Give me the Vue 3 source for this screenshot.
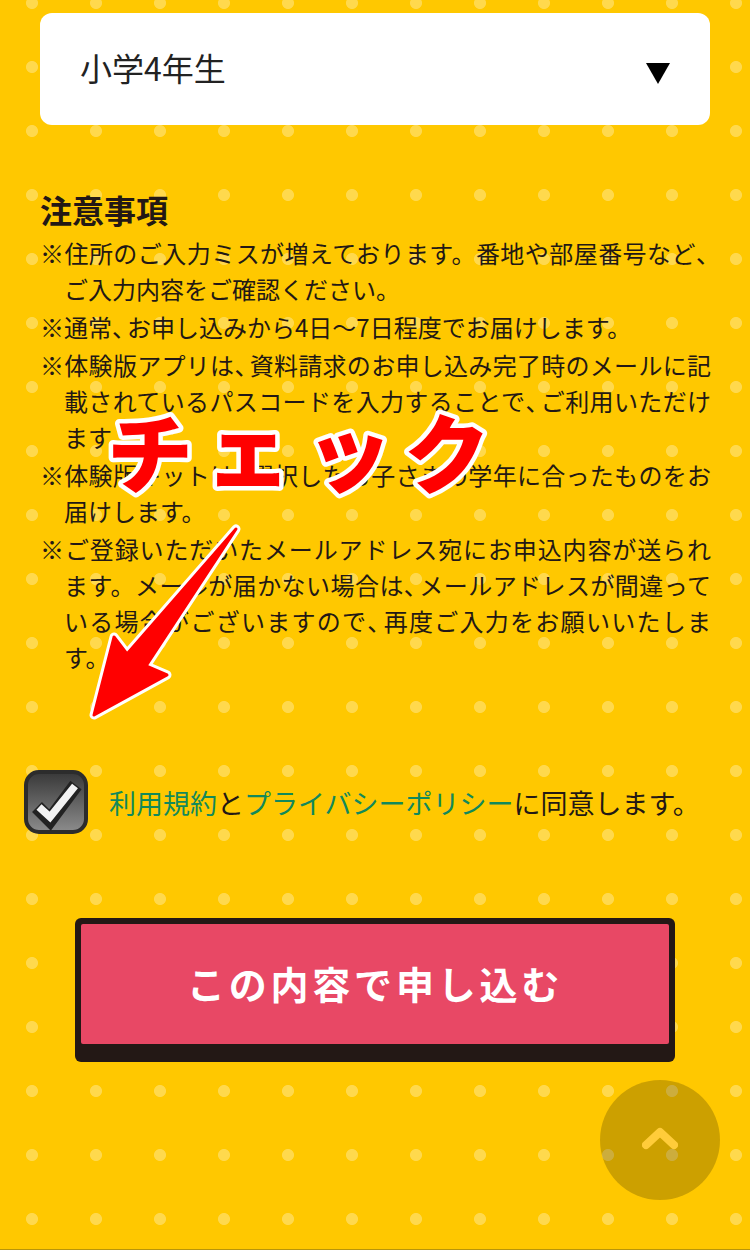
<script setup>
const raw = [
  ['※住所のご入力ミスが増えております。番地や部屋番号など、', 'ご入力内容をご確認ください。'],
  ['※通常、お申し込みから4日〜7日程度でお届けします。'],
  ['※体験版アプリは、資料請求のお申し込み完了時のメールに記', '載されているパスコードを入力することで、ご利用いただけ', 'ます。'],
  ['※体験版キットは、選択したお子さまの学年に合ったものをお', '届けします。'],
  ['※ご登録いただいたメールアドレス宛にお申込内容が送られ', 'ます。メールが届かない場合は、メールアドレスが間違って', 'いる場合がございますので、再度ご入力をお願いいたしま', 'す。']
]
const notes = raw.map((note) => note.map((line) => line.split('、')))
const stamp = [
  { ch: 'チ', x: 107, y: 487 },
  { ch: 'ェ', x: 205, y: 483 },
  { ch: 'ッ', x: 306, y: 485 },
  { ch: 'ク', x: 404, y: 487 }
]
</script>

<template>
  <div class="page">
    <div class="select">
      <span>小学4年生</span>
      <svg class="caret" width="24" height="21" viewBox="0 0 24 21"><polygon points="0,0 24,0 12,21" fill="#000" /></svg>
    </div>

    <section class="notes">
      <h2>注意事項</h2>
      <ul>
        <li v-for="(note, i) in notes" :key="i">
          <div v-for="(parts, j) in note" :key="j" :class="{ cont: j > 0, full: j < note.length - 1 }">
            <template v-for="(part, k) in parts" :key="k"><span v-if="k > 0" class="comma">、</span>{{ part }}</template>
          </div>
        </li>
      </ul>
    </section>

    <div class="agree">
      <svg class="check" width="64" height="64" viewBox="0 0 64 64">
        <defs>
          <linearGradient id="boxGrad" x1="0" y1="0" x2="0" y2="1">
            <stop offset="0" stop-color="#383838" />
            <stop offset="1" stop-color="#8c8c8c" />
          </linearGradient>
        </defs>
        <rect x="2" y="2" width="60" height="60" rx="13" fill="url(#boxGrad)" stroke="#2c2c2c" stroke-width="4" />
        <path d="M13 37 L26 50 L52 15" fill="none" stroke="#222" stroke-width="14" stroke-linejoin="miter" />
        <path d="M15 37 L26 47 L51 16" fill="none" stroke="#f2f2f2" stroke-width="7.5" stroke-linejoin="miter" />
      </svg>
      <p><a>利用規約</a>と<a>プライバシーポリシー</a>に同意します。</p>
    </div>

    <button class="submit"><span>この内容で申し込む</span></button>

    <div class="to-top">
      <svg width="36" height="24" viewBox="0 0 36 24"><path d="M4 18 L18 5 L32 18" fill="none" stroke="#ffcc3a" stroke-width="8" stroke-linecap="round" stroke-linejoin="round" /></svg>
    </div>

    <svg class="overlay" width="750" height="760" viewBox="0 0 750 760">
      <text v-for="s in stamp" :key="s.ch" :x="s.x" :y="s.y" class="stamp">{{ s.ch }}</text>
      <polygon points="236,529 127,654 114,637 94,715 167,675 146,666" fill="#fff" stroke="#fff" stroke-width="9" stroke-linejoin="round" />
      <polygon points="236,529 127,654 114,637 94,715 167,675 146,666" fill="#f00" stroke="#f00" stroke-width="3" stroke-linejoin="round" />
    </svg>
  </div>
</template>

<style scoped>
.page {
  position: relative;
  width: 750px;
  height: 1250px;
  box-sizing: border-box;
  overflow: hidden;
  padding-top: 13px;
  background-color: #ffc800;
  background-image: radial-gradient(circle at center, rgba(255, 255, 255, 0.3) 0 5.6px, rgba(255, 255, 255, 0) 6.4px);
  background-size: 64px 64px;
  background-position: 0 -29px;
  border-bottom: 1px solid #b8950a;
  font-family: "Noto Sans CJK JP", "Noto Sans", sans-serif;
  color: #231815;
}
.select {
  display: flex;
  align-items: center;
  justify-content: space-between;
  height: 112px;
  margin: 0 40px;
  padding: 0 40px;
  box-sizing: border-box;
  background: #fff;
  border-radius: 12px;
  font-size: 32px;
  color: #222;
}
.select span { position: relative; top: -2px; }
.caret { margin-top: 8px; }
.notes {
  width: 671px;
  margin: 62px 0 0 40px;
}
.notes h2 {
  margin: 0 0 4px;
  font-size: 32px;
  line-height: 44px;
  font-weight: 700;
}
.notes ul {
  margin: 0;
  padding: 0;
  list-style: none;
}
.notes li {
  margin-bottom: 2px;
  font-size: 24px;
  line-height: 36px;
  white-space: nowrap;
}
.cont { padding-left: 24px; }
.full {
  text-align: justify;
  text-align-last: justify;
  white-space: normal;
}
.comma { letter-spacing: -9px; }
.agree {
  display: flex;
  align-items: center;
  gap: 21px;
  margin: 95px 0 0 24px;
}
.check { flex: none; display: block; }
.agree p {
  position: relative;
  top: 1px;
  margin: 0;
  font-size: 27px;
  line-height: 40px;
  white-space: nowrap;
}
.agree a { color: #12895b; }
.submit {
  display: block;
  box-sizing: border-box;
  width: 600px;
  height: 144px;
  margin: 84px 0 0 75px;
  padding: 6px 6px 18px;
  border: 0;
  border-radius: 6px;
  background: #231815;
  font-family: inherit;
}
.submit span {
  display: flex;
  align-items: center;
  justify-content: center;
  box-sizing: border-box;
  height: 100%;
  padding-bottom: 4px;
  background: #e84865;
  border-radius: 2px;
  color: #fff;
  font-size: 38px;
  font-weight: 700;
  letter-spacing: 3.8px;
}
.to-top {
  position: absolute;
  left: 600px;
  top: 1080px;
  width: 120px;
  height: 120px;
  display: flex;
  align-items: center;
  justify-content: center;
  border-radius: 50%;
  background: rgba(0, 0, 0, 0.2);
}
.to-top svg { margin-top: -3px; }
.overlay {
  position: absolute;
  left: 0;
  top: 0;
  pointer-events: none;
}
.stamp {
  font-family: "Noto Sans CJK JP", sans-serif;
  font-size: 86px;
  font-weight: 900;
  fill: #f00;
  stroke: #fff;
  stroke-width: 9px;
  stroke-linejoin: round;
  paint-order: stroke fill;
}
</style>
